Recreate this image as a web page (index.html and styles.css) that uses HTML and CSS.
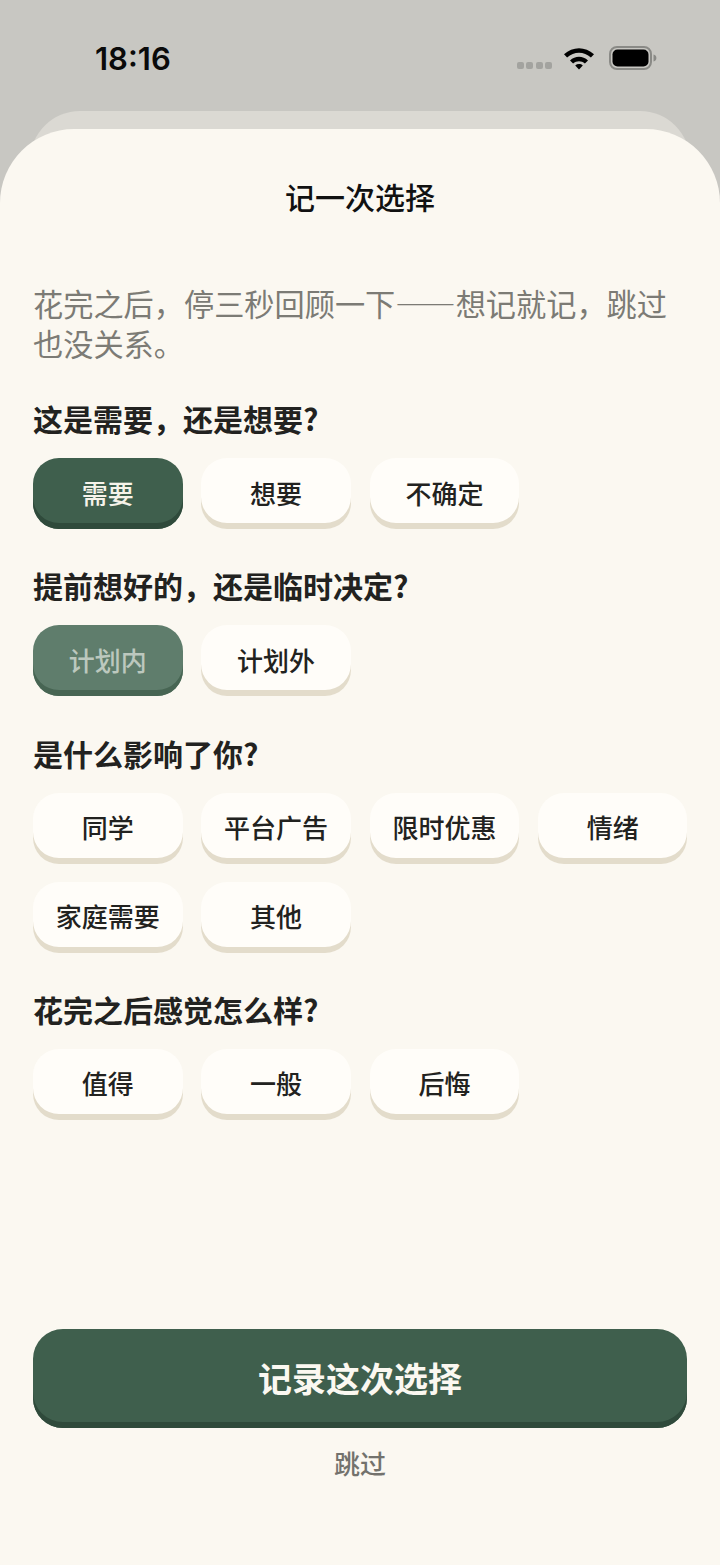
FILE: index.html
```html
<!DOCTYPE html>
<html lang="zh-CN">
  <head>
    <meta charset="utf-8" />
    <meta name="viewport" content="width=device-width, initial-scale=1" />
    <title>记一次选择</title>
    <link rel="stylesheet" href="styles.css">
  </head>
  <body>
    <div class="status-bar">
      <span class="time">18:16</span>
      <div class="status-icons">
        <div class="signal"><i></i><i></i><i></i><i></i></div>
        <svg class="wifi" width="32" height="24" viewBox="0 0 32 24">
          <path d="M1 8.2 C9.6 0.2 22.4 0.2 31 8.2 L27.9 11.6 C21 5.2 11 5.2 4.1 11.6 Z" />
          <path d="M7 14.4 C12.2 9.6 19.8 9.6 25 14.4 L21.9 17.6 C18.4 14.6 13.6 14.6 10.1 17.6 Z" />
          <path d="M12.2 19.4 C14.4 17.6 17.6 17.6 19.8 19.4 L16 23.6 Z" />
        </svg>
        <svg class="battery" width="48" height="24" viewBox="0 0 48 24">
          <rect x="1" y="1" width="41" height="22" rx="7" fill="none" stroke="#8a8a86" stroke-width="2" />
          <rect x="3.5" y="3.5" width="36" height="17" rx="5" fill="#000" />
          <path d="M44.5 8.5 C46.4 9 47.4 10.4 47.4 12 C47.4 13.6 46.4 15 44.5 15.5 Z" fill="#8a8a86" />
        </svg>
      </div>
    </div>

    <main class="sheet">
      <h1 class="title">记一次选择</h1>
      <p class="intro">花完之后，停三秒回顾一下——想记就记，跳过也没关系。</p>

      <section class="group">
        <h2>这是需要，还是想要?</h2>
        <div class="chips">
          <button class="chip selected">需要</button>
          <button class="chip">想要</button>
          <button class="chip">不确定</button>
        </div>
      </section>

      <section class="group">
        <h2>提前想好的，还是临时决定?</h2>
        <div class="chips">
          <button class="chip fading">计划内</button>
          <button class="chip">计划外</button>
        </div>
      </section>

      <section class="group">
        <h2>是什么影响了你?</h2>
        <div class="chips">
          <button class="chip">同学</button>
          <button class="chip">平台广告</button>
          <button class="chip">限时优惠</button>
          <button class="chip">情绪</button>
          <button class="chip">家庭需要</button>
          <button class="chip">其他</button>
        </div>
      </section>

      <section class="group">
        <h2>花完之后感觉怎么样?</h2>
        <div class="chips">
          <button class="chip">值得</button>
          <button class="chip">一般</button>
          <button class="chip">后悔</button>
        </div>
      </section>

      <div class="actions">
        <button class="submit">记录这次选择</button>
        <button class="skip">跳过</button>
      </div>
    </main>
  </body>
</html>
```

FILE: styles.css
```css
* {
  box-sizing: border-box;
}
body {
  margin: 0;
  width: 720px;
  height: 1565px;
  overflow: hidden;
  background: #c8c7c2;
  font-family: "Noto Sans CJK SC", "Noto Sans", sans-serif;
  display: flex;
  flex-direction: column;
}
button {
  font-family: inherit;
  border: none;
  cursor: pointer;
}

.status-bar {
  height: 129px;
  flex-shrink: 0;
  padding: 40px 63px 0 95px;
  display: flex;
  justify-content: space-between;
  align-items: flex-start;
}
.time {
  font-family: Inter, Roboto, sans-serif;
  font-size: 31px;
  font-weight: 600;
  line-height: 38px;
  color: #0a0a0a;
}
.status-icons {
  display: flex;
  align-items: flex-start;
  padding-top: 6px;
}
.signal {
  display: flex;
  gap: 2.5px;
  margin: 16px 11px 0 0;
}
.signal i {
  width: 7px;
  height: 7px;
  border-radius: 2px;
  background: #a3a39f;
}
.wifi {
  fill: #000;
  margin-right: 14px;
}

.sheet {
  flex: 1;
  position: relative;
  background: #fbf8f1;
  border-radius: 74px 74px 0 0;
  padding: 0 33px 82px;
  display: flex;
  flex-direction: column;
}
.sheet::before {
  content: "";
  position: absolute;
  z-index: -1;
  top: -18px;
  left: 30px;
  right: 30px;
  height: 120px;
  border-radius: 50px 50px 0 0;
  background: #dbd9d3;
}

.title {
  margin: 0;
  height: 154px;
  padding-top: 45px;
  font-size: 30px;
  font-weight: 500;
  line-height: 44px;
  text-align: center;
  color: #111;
}
.intro {
  margin: 0 0 36px;
  font-size: 30.2px;
  line-height: 40px;
  color: #7c7b75;
}

.group {
  margin-bottom: 37.3px;
}
.group h2 {
  margin: 0 0 20px;
  height: 39px;
  font-size: 30px;
  font-weight: 700;
  line-height: 38px;
  color: #222220;
}
.chips {
  display: grid;
  grid-template-columns: repeat(4, 149.5px);
  column-gap: 18.83px;
  row-gap: 18px;
}
.chip {
  height: 71px;
  padding: 0 0 3px;
  border-radius: 26px;
  background: #fffdf9;
  box-shadow: inset 0 -6px 0 #e3dccb;
  font-size: 26px;
  font-weight: 500;
  color: #222220;
}
.chip.selected {
  background: #3f5f4d;
  box-shadow: inset 0 -6px 0 #2f4a3b;
  color: #f6f3ea;
}
.chip.fading {
  background: #5f7d6c;
  box-shadow: inset 0 -6px 0 #476553;
  color: #bcc8be;
}

.actions {
  margin-top: auto;
  display: flex;
  flex-direction: column;
  align-items: center;
}
.submit {
  width: 100%;
  height: 99px;
  padding: 0 0 2px;
  border-radius: 30px;
  background: #3f5f4d;
  box-shadow: inset 0 -6px 0 #2f4a3b;
  font-size: 34px;
  font-weight: 700;
  color: #fbf8f1;
}
.skip {
  margin-top: 15px;
  height: 40px;
  padding: 0;
  background: none;
  font-size: 26px;
  font-weight: 500;
  line-height: 40px;
  color: #73726d;
}
```
